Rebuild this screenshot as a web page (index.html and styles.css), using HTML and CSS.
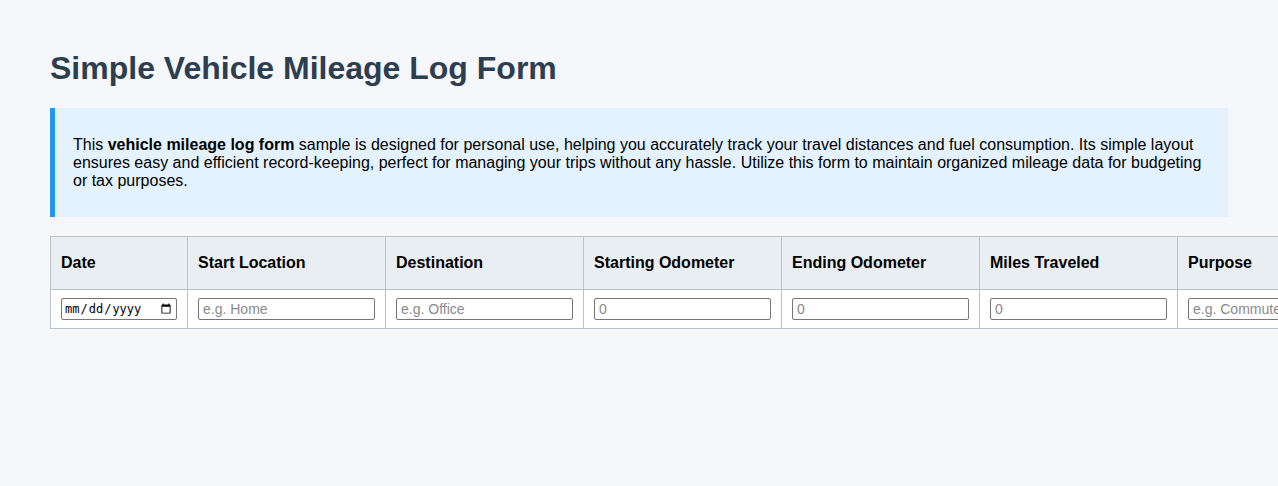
FILE: index.html
```html
<!DOCTYPE html>
<html lang="en">
<head>
<meta charset="utf-8">
<title>Simple Vehicle Mileage Log Form</title>
<link rel="stylesheet" href="styles.css">
</head>
<body>
<div class="page">
  <h1 class="title">Simple Vehicle Mileage Log Form</h1>
  <div class="info">
    <p>This <strong>vehicle mileage log form</strong> sample is designed for personal use, helping you accurately track your travel distances and fuel consumption. Its simple layout ensures easy and efficient record-keeping, perfect for managing your trips without any hassle. Utilize this form to maintain organized mileage data for budgeting or tax purposes.</p>
  </div>
  <table class="log">
    <colgroup>
      <col class="c-date">
      <col class="c-wide">
      <col class="c-wide">
      <col class="c-wide">
      <col class="c-wide">
      <col class="c-wide">
      <col class="c-wide">
    </colgroup>
    <thead>
      <tr>
        <th>Date</th>
        <th>Start Location</th>
        <th>Destination</th>
        <th>Starting Odometer</th>
        <th>Ending Odometer</th>
        <th>Miles Traveled</th>
        <th>Purpose</th>
      </tr>
    </thead>
    <tbody>
      <tr>
        <td><input class="field date" type="date"></td>
        <td><input class="field" type="text" placeholder="e.g. Home"></td>
        <td><input class="field" type="text" placeholder="e.g. Office"></td>
        <td><input class="field" type="number" placeholder="0"></td>
        <td><input class="field" type="number" placeholder="0"></td>
        <td><input class="field" type="number" placeholder="0"></td>
        <td><input class="field" type="text" placeholder="e.g. Commute"></td>
      </tr>
    </tbody>
  </table>
</div>
</body>
</html>
```

FILE: styles.css
```css
html, body {
  margin: 0;
  padding: 0;
  background: #f5f7fa;
  font-family: "Liberation Sans", Arial, sans-serif;
  overflow: hidden;
}

.page {
  padding: 50px 50px 0 50px;
}

.title {
  margin: 0 0 21px 0;
  font-size: 32px;
  line-height: 37px;
  font-weight: bold;
  color: #2c3e50;
}

.info {
  background: #e3f2fd;
  border-left: 5px solid #2196f3;
  padding: 28px 18px 27px 18px;
  margin: 0 0 19px 0;
}

.info p {
  margin: 0;
  font-size: 16px;
  line-height: 18px;
  color: #000;
}

.log {
  border-collapse: collapse;
  table-layout: fixed;
  width: 1325px;
}

.c-date { width: 137px; }
.c-wide { width: 198px; }

.log th, .log td {
  border: 1px solid #b8c4cc;
  text-align: left;
}

.log th {
  background: #e9eef2;
  padding: 17px 10px 17px 10px;
  font-size: 16px;
  line-height: 18px;
  font-weight: bold;
  color: #000;
}

.log td {
  background: #fff;
  padding: 8px 10px;
}

.field {
  box-sizing: border-box;
  width: 100%;
  height: 22px;
  margin: 0;
  padding: 1px 4px;
  border: 1px solid #767676;
  border-radius: 2px;
  background: #fff;
  font-family: "Liberation Sans", Arial, sans-serif;
  font-size: 14px;
  color: #000;
}

.field::placeholder {
  color: #8a8a8a;
}

.field.date {
  font-family: "DejaVu Sans Mono", "Liberation Mono", monospace;
  font-size: 12px;
  padding: 1px 2px;
}
```
